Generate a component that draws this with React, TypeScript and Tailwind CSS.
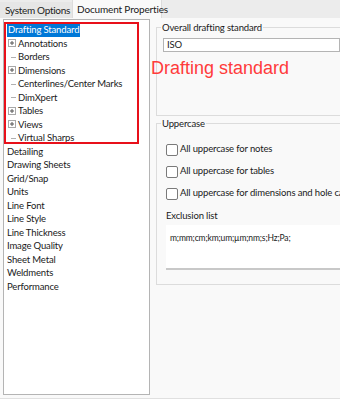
import React from "react";

const font = { fontFamily: 'Lato, "Noto Sans", sans-serif' };

function Plus() {
  return (
    <svg width="8" height="8" viewBox="0 0 8 8" className="shrink-0">
      <rect x="0.5" y="0.5" width="7" height="7" fill="white" stroke="#a8a8a8" />
      <path d="M2 4H6M4 2V6" stroke="#555" strokeWidth="1" />
    </svg>
  );
}

function Leaf() {
  return (
    <svg width="8" height="8" viewBox="0 0 8 8" className="shrink-0">
      <path d="M3 4.5H8" stroke="#b0b0b0" strokeWidth="1" />
    </svg>
  );
}

const sub: [string, boolean][] = [
  ["Annotations", true],
  ["Borders", false],
  ["Dimensions", true],
  ["Centerlines/Center Marks", false],
  ["DimXpert", false],
  ["Tables", true],
  ["Views", true],
  ["Virtual Sharps", false],
];

const top = [
  "Detailing",
  "Drawing Sheets",
  "Grid/Snap",
  "Units",
  "Line Font",
  "Line Style",
  "Line Thickness",
  "Image Quality",
  "Sheet Metal",
  "Weldments",
  "Performance",
];

function Check({ label }: { label: string }) {
  return (
    <div className="flex items-center h-[13px] gap-[2px] whitespace-nowrap">
      <div className="w-[12px] h-[12px] rounded-[2px] border border-[#7a7a7a] bg-white shrink-0" />
      <span>{label}</span>
    </div>
  );
}

export default function App() {
  return (
    <div
      className="w-[340px] h-[399px] bg-[#f0f0f0] flex flex-col overflow-hidden text-[9.5px] tracking-[-0.15px] text-[#1a1a1a] relative"
      style={font}
    >
      {/* tabs */}
      <div className="h-[18px] flex items-end bg-[#ececec] shrink-0 whitespace-nowrap">
        <div className="h-[16px] w-[72px] shrink-0 pl-[5px] flex items-center text-[#222] bg-[#e6e6e6] text-[10px] tracking-[-0.3px]">
          System Options
        </div>
        <div className="h-[18px] w-[90px] shrink-0 pl-[4px] flex items-center bg-[#f9f9f9] border-l border-r border-[#dcdcdc] text-[10px]">
          Document Properties
        </div>
      </div>
      {/* body */}
      <div className="flex-1 flex bg-[#f9f9f9] pb-[3px] border-b border-[#e0e0e0]">
        <div className="ml-[3px] mt-[1px] w-[147px] bg-white border border-[#b4b4b4] pt-[3px] leading-[13.5px]">
          <div className="pl-[3px] flex">
            <span className="bg-[#0078d7] text-white px-[1px]">Drafting Standard</span>
          </div>
          {sub.map(([t, p]) => (
            <div key={t} className="flex items-center h-[13.5px] pl-[4px] gap-[2px]">
              {p ? <Plus /> : <Leaf />}
              <span>{t}</span>
            </div>
          ))}
          {top.map((t) => (
            <div key={t} className="h-[13.5px] pl-[3px]">
              {t}
            </div>
          ))}
        </div>
        <div className="flex-1 flex flex-col pl-[6px] pt-[9px] min-w-0">
          {/* group 1 */}
          <div className="relative border-t border-l border-b border-[#dcdcdc] h-[89px] pl-[6px] pt-[10px]">
            <div className="absolute -top-[7px] left-[4px] bg-[#f9f9f9] px-[1px] whitespace-nowrap">
              Overall drafting standard
            </div>
            <div className="h-[14px] bg-white border border-[#b4b4b4] flex items-center pl-[3px]">ISO</div>
          </div>
          {/* group 2 */}
          <div className="relative mt-[7px] border-t border-l border-b border-[#dcdcdc] h-[162px] pl-[9px] pt-[19px] flex flex-col">
            <div className="absolute -top-[7px] left-[4px] bg-[#f9f9f9] px-[1px]">Uppercase</div>
            <div className="flex flex-col gap-[9px]">
              <Check label="All uppercase for notes" />
              <Check label="All uppercase for tables" />
              <Check label="All uppercase for dimensions and hole callouts" />
            </div>
            <div className="mt-[9px] h-[13px]">Exclusion list</div>
            <div className="mt-[3px] h-[45px] bg-white border-b-2 border-[#c8c8c8] pl-[4px] pt-[7px] text-[8.5px] whitespace-nowrap">
              m;mm;cm;km;um;µm;nm;s;Hz;Pa;
            </div>
          </div>
        </div>
      </div>
      {/* annotations */}
      <div className="absolute left-[4px] top-[22px] w-[135px] h-[122px] border-2 border-[#e8101a] pointer-events-none" />
      <div
        className="absolute left-[151px] top-[57px] text-[18px] tracking-normal text-[#ff3b3b] leading-[22px]"
        style={{ fontFamily: '"Liberation Sans", Arial, sans-serif' }}
      >
        Drafting standard
      </div>
    </div>
  );
}
